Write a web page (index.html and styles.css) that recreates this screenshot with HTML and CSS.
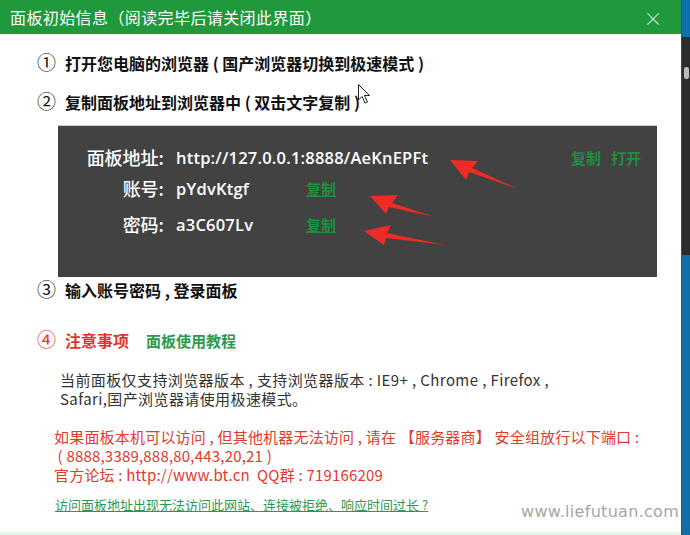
FILE: index.html
```html
<!DOCTYPE html>
<html>
	<head>
		<meta charset="UTF-8">
		<title>面板初始信息</title>
		<link rel="stylesheet" href="styles.css">
	</head>
	<body>
		<div class="page">
			<div class="dialog">
				<div class="dialog-title">
					<span>面板初始信息（阅读完毕后请关闭此界面）</span>
					<span class="close">×</span>
				</div>
				<div class="dialog-body">
					<p class="step"><span class="num">①</span>打开您电脑的浏览器 ( 国产浏览器切换到极速模式 )</p>
					<p class="step"><span class="num">②</span>复制面板地址到浏览器中 ( 双击文字复制 )</p>
					<div class="info-box">
						<div class="info-row row-url">
							<span class="label">面板地址:</span>
							<span class="value">http://127.0.0.1:8888/AeKnEPFt</span>
							<span class="actions"><a>复制</a><a>打开</a></span>
						</div>
						<div class="info-row row-user">
							<span class="label">账号:</span>
							<span class="value short">pYdvKtgf</span>
							<a class="copy">复制</a>
						</div>
						<div class="info-row row-pass">
							<span class="label">密码:</span>
							<span class="value short">a3C607Lv</span>
							<a class="copy">复制</a>
						</div>
					</div>
					<p class="step step3"><span class="num">③</span>输入账号密码 , 登录面板</p>
					<p class="step step4"><span class="num">④</span>注意事项<a class="tutorial">面板使用教程</a></p>
					<p class="note">当前面板仅支持浏览器版本 , 支持浏览器版本 : IE9+ , Chrome , Firefox ,<br>Safari,国产浏览器请使用极速模式。</p>
					<p class="warn">如果面板本机可以访问 , 但其他机器无法访问 , 请在 【服务器商】 安全组放行以下端口 :<br>&nbsp;( 8888,3389,888,80,443,20,21 )<br>官方论坛 : http://www.bt.cn&nbsp; QQ群 : 719166209</p>
					<a class="help">访问面板地址出现无法访问此网站、连接被拒绝、响应时间过长 ?</a>
				</div>
				<svg class="arrows" width="682" height="535" viewBox="0 0 682 535">
					<polygon points="450,160 478,161 472,168 518,189 469,172 466,180" fill="#ee2b24"/>
					<polygon points="370,196 398,195 392,203 435,217 389,207 386,214" fill="#ee2b24"/>
					<polygon points="364,231 391,225 387,233 445,245 386,238 384,245" fill="#ee2b24"/>
					<path d="M358.5 84.5 L358.5 100 L362 96.5 L365 103 L367.5 102 L364.5 95.5 L369.5 95.5 Z" fill="#fff" stroke="#222" stroke-width="1"/>
				</svg>
				<span class="watermark">www.liefutuan.com</span>
			</div>
			<div class="side">
				<div class="side-top"></div>
				<div class="side-dark"><i class="mark"></i></div>
				<div class="side-bottom"></div>
			</div>
		</div>
	</body>
</html>
```

FILE: styles.css
```css
*{margin:0;padding:0;}
body{
	width:690px;
	height:535px;
	overflow:hidden;
	background:#e4f6ea;
	font-family:"Noto Sans CJK SC","Noto Sans",sans-serif;
}
.page{
	display:flex;
	height:535px;
}
.dialog{
	width:682px;
	height:532px;
	background:#fff;
	position:relative;
}
.dialog-title{
	height:34px;
	background:#1f993c;
	color:#fff;
	font-size:16px;
	letter-spacing:.4px;
	display:flex;
	align-items:center;
	justify-content:space-between;
	padding:0 18px 0 10px;
}
.dialog-title .close{
	font-size:19px;
	color:#cfe9d5;
	font-weight:300;
}
.dialog-body{
	padding:16px 0 0 37px;
}
.step{
	font-size:16px;
	font-weight:bold;
	color:#111;
	line-height:24px;
	margin-bottom:14px;
}
.step .num{
	font-weight:normal;
	display:inline-block;
	width:28px;
	font-size:19px;
}
.info-box{
	margin:-3px 0 0 21px;
	width:599px;
	height:152px;
	box-sizing:border-box;
	background:#424242;
	border-top:1px solid #ccc;
	padding:17px 16px 0 0;
	color:#fff;
}
.info-row{
	display:flex;
	align-items:center;
	height:28px;
	font-size:16.5px;
	font-weight:bold;
}
.row-user{margin-top:3px;}
.row-pass{margin-top:8px;}
.info-row .label{
	width:106px;
	text-align:right;
	padding-right:12px;
	font-size:18px;
	font-weight:500;
}
.info-row .value{
	font-family:"Open Sans","Noto Sans",sans-serif;
	font-weight:600;
	letter-spacing:.2px;
}
.info-row .value.short{width:130px;}
.info-row a{
	color:#1f8e3d;
	font-size:15px;
	font-weight:bold;
}
.info-row .copy{text-decoration:underline;}
.actions{
	margin-left:auto;
	display:flex;
	gap:10px;
}
.step3{margin-top:0;}
.step4{
	margin-top:25px;
	color:#e5332a;
	margin-bottom:0;
}
.step4 .num{color:#e5332a;}
.tutorial{
	color:#2d9a4a;
	font-size:15px;
	margin-left:17px;
}
.note{
	margin:17px 0 0 23px;
	font-size:15px;
	line-height:19px;
	letter-spacing:.4px;
	color:#333;
}
.warn{
	margin:19px 0 0 17px;
	font-size:15px;
	line-height:19px;
	letter-spacing:.2px;
	color:#e23a2c;
}
.help{
	display:inline-block;
	margin:11px 0 0 18px;
	font-size:13px;
	color:#2f9650;
	text-decoration:underline;
}
.arrows{
	position:absolute;
	left:0;
	top:0;
	pointer-events:none;
}
.watermark{
	position:absolute;
	left:521px;
	top:502px;
	font-family:"DejaVu Sans",sans-serif;
	font-size:16px;
	color:#a6a6a6;
	letter-spacing:.3px;
}
.side{
	width:8px;
	display:flex;
	flex-direction:column;
	border-left:1px solid #2a4f66;
}
.side-top{height:37px;background:#0c70ae;}
.side-dark{
	height:188px;
	background:#2c2c2c;
	padding-top:30px;
}
.side-dark .mark{
	display:block;
	width:5px;
	height:12px;
	margin-left:2px;
	background:#bbb;
	border-radius:2px;
}
.side-bottom{flex:1;background:#0f6ea6;}
```
